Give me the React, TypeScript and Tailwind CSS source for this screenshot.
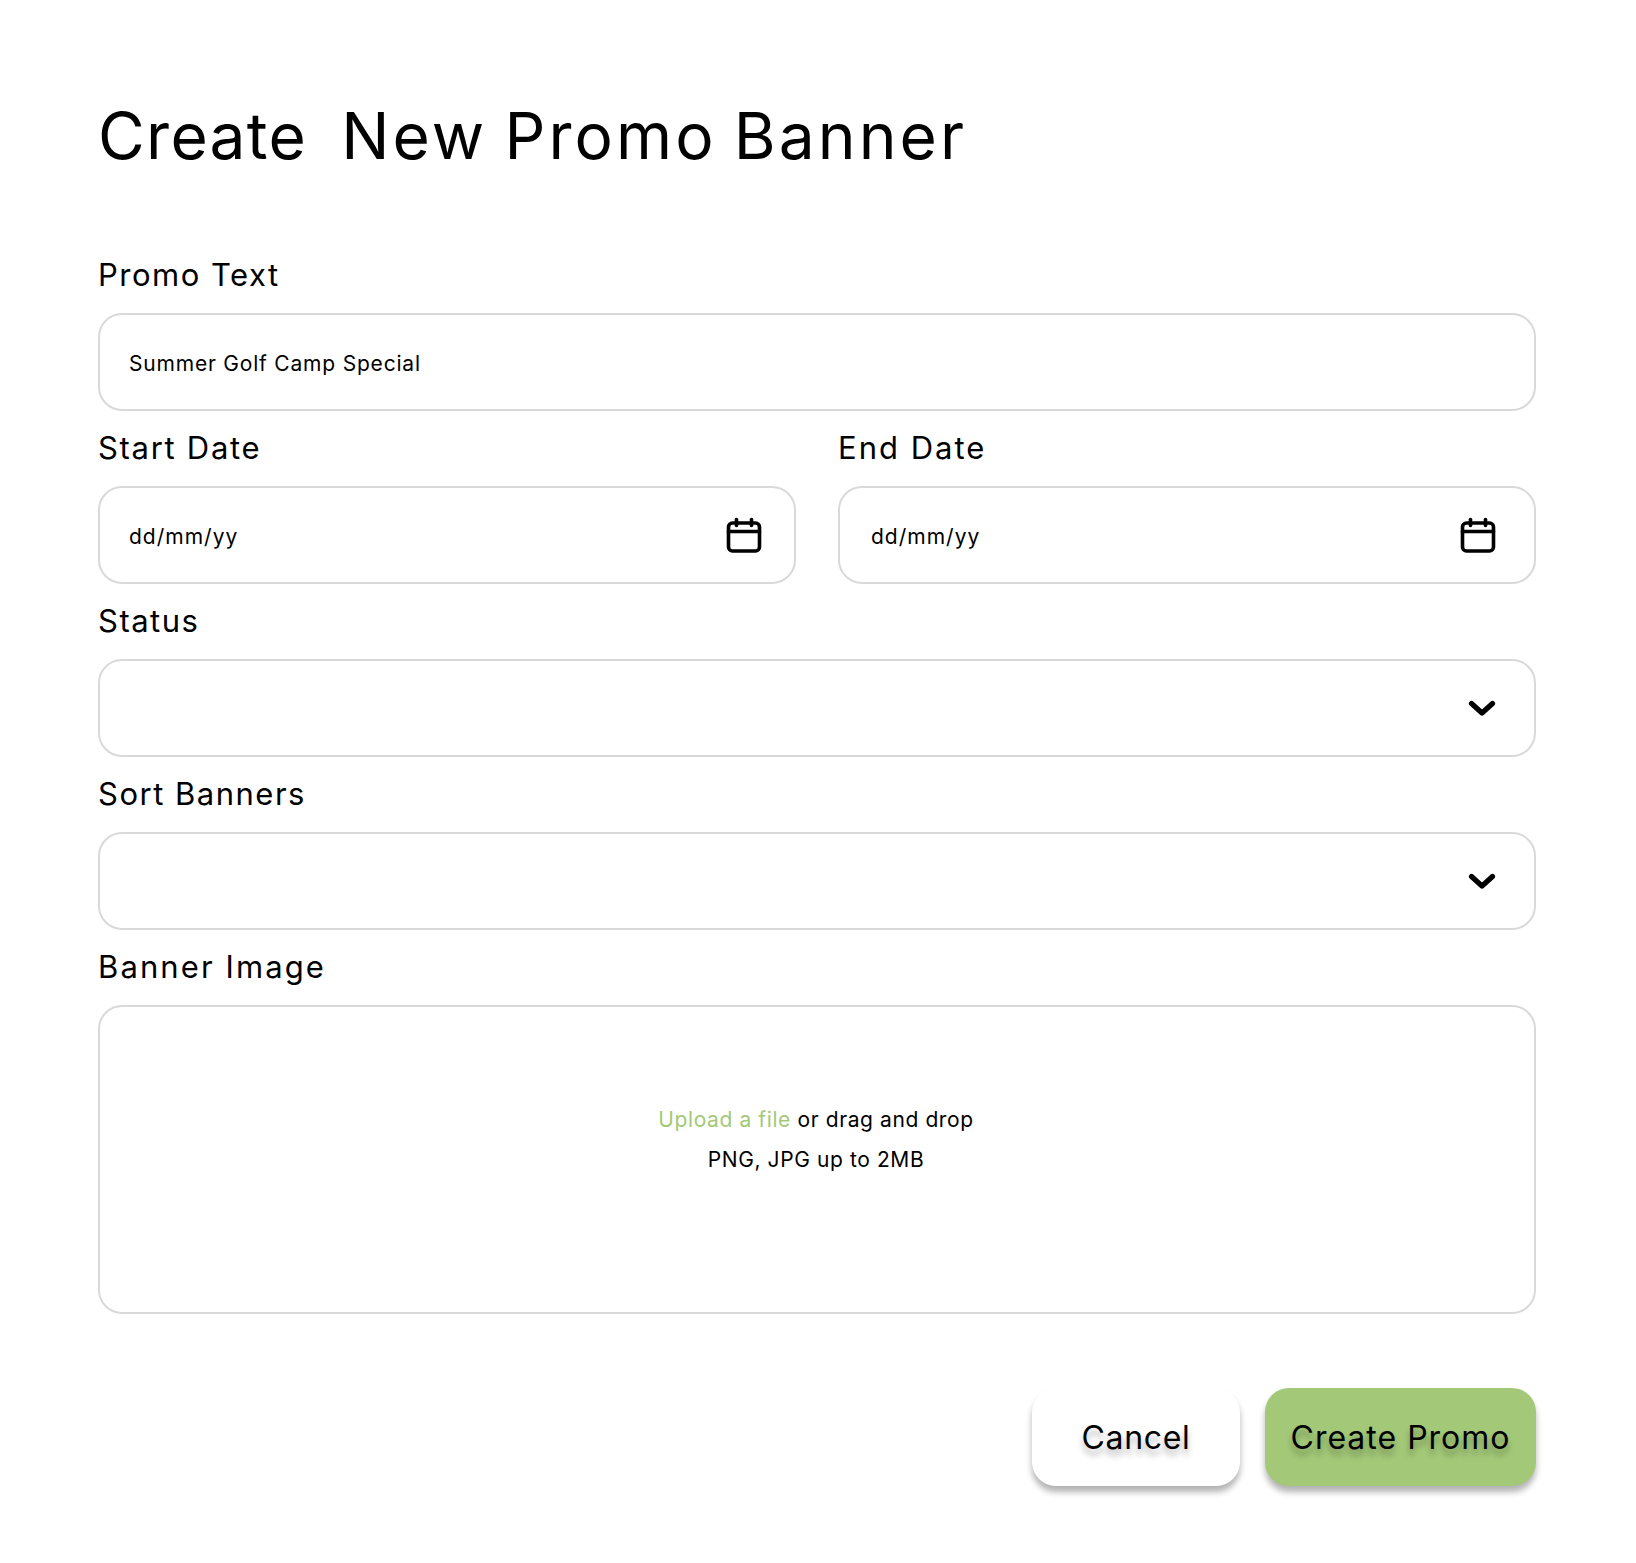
import React from "react";

const font = "font-['Inter','Liberation_Sans',sans-serif]";

function CalendarIcon() {
  return (
    <svg width="40" height="40" viewBox="0 0 40 40" fill="none" stroke="#000" strokeWidth="3.6" strokeLinecap="round" strokeLinejoin="round">
      <rect x="4.5" y="7" width="31" height="28" rx="4" />
      <path d="M4.5 15.5H35.5" />
      <path d="M12.5 3.5V9.5" />
      <path d="M27.5 3.5V9.5" />
    </svg>
  );
}

function ChevronIcon() {
  return (
    <svg width="30" height="20" viewBox="0 0 30 20" fill="none" stroke="#000" strokeWidth="5.2" strokeLinecap="round" strokeLinejoin="round">
      <path d="M4.5 4.5L15 14L25.5 4.5" />
    </svg>
  );
}

function Label({ children, tracking = "tracking-[1.5px]" }: { children: React.ReactNode; tracking?: string }) {
  return <div className={"h-[38px] mb-[19px] text-[31px] leading-[38px] text-black " + tracking}>{children}</div>;
}

function Field({ label, children, tracking }: { label: string; children?: React.ReactNode; tracking?: string }) {
  return (
    <div className="flex-1">
      <Label tracking={tracking}>{label}</Label>
      <div className="h-[98px] rounded-[24px] border-2 border-[#d9d9d9] bg-white flex items-center justify-between">
        {children}
      </div>
    </div>
  );
}

export default function App() {
  return (
    <div className={"w-full h-[1563px] bg-white pl-[98px] pr-[100px] pt-[91px] " + font}>
      <h1 className="h-[90px] text-[64px] leading-[90px] font-normal text-black whitespace-pre [word-spacing:-4px]">
        <span className="tracking-[1.3px]">Create</span>
        <span className="tracking-[3.1px]">  New Promo Banner</span>
      </h1>
      <div className="mt-[74.5px] flex flex-col gap-[18px]">
        <Field label="Promo Text">
          <span className="pl-[29px] pt-[5px] text-[21px] tracking-[0.8px] text-black">Summer Golf Camp Special</span>
        </Field>
        <div className="flex gap-[42px]">
          <Field label="Start Date" tracking="tracking-[1.7px]">
            <span className="pl-[29px] pt-[4px] text-[21px] tracking-[1px] text-black">dd/mm/yy</span>
            <span className="pr-[30px] pt-[2px] flex"><CalendarIcon /></span>
          </Field>
          <Field label="End Date" tracking="tracking-[2px]">
            <span className="pl-[31px] pt-[4px] text-[21px] tracking-[1px] text-black">dd/mm/yy</span>
            <span className="pr-[36px] pt-[2px] flex"><CalendarIcon /></span>
          </Field>
        </div>
        <Field label="Status">
          <span />
          <span className="pr-[37px] pt-[2px] flex"><ChevronIcon /></span>
        </Field>
        <Field label="Sort Banners">
          <span />
          <span className="pr-[37px] pt-[2px] flex"><ChevronIcon /></span>
        </Field>
        <div>
          <Label tracking="tracking-[2.1px]">Banner Image</Label>
          <div className="h-[309px] rounded-[24px] border-2 border-[#d9d9d9] bg-white flex flex-col items-center justify-center gap-[14px] text-[21px] leading-[26px] tracking-[0.6px] text-black pr-[2px] pb-[38px]">
            <div><span className="text-[#a3c978]">Upload a file</span> or drag and drop</div>
            <div>PNG, JPG up to 2MB</div>
          </div>
        </div>
      </div>
      <div className="mt-[74px] flex justify-end gap-[25px] items-end">
        <button className="w-[208px] h-[98px] pt-[2px] rounded-[24px] bg-white shadow-[0_6px_6px_rgba(0,0,0,0.3)] text-[32px] tracking-[0.7px] text-black [text-shadow:0_6px_6px_rgba(0,0,0,0.3)]">Cancel</button>
        <button className="w-[271px] h-[98px] pt-[2px] rounded-[24px] bg-[#a3c978] shadow-[0_6px_6px_rgba(0,0,0,0.3)] text-[32px] tracking-[1px] text-black [text-shadow:0_6px_6px_rgba(0,0,0,0.3)]">Create Promo</button>
      </div>
    </div>
  );
}
